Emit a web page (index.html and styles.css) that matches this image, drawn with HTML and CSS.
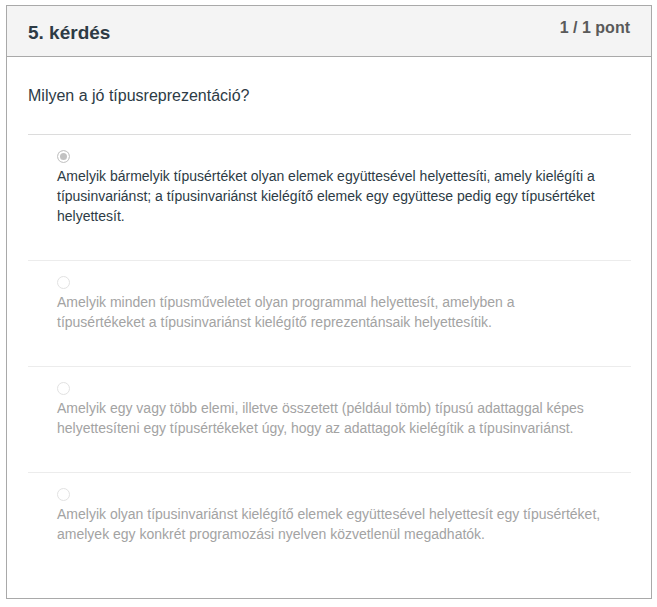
FILE: index.html
```html
<!DOCTYPE html>
<html lang="hu">
<head>
<meta charset="utf-8">
<title>5. kérdés</title>
<link rel="stylesheet" href="styles.css">
</head>
<body>
<div class="question">
  <div class="header">
    <h2 class="title">5. kérdés</h2>
    <span class="points">1 / 1 pont</span>
  </div>
  <div class="content">
    <div class="prompt">Milyen a jó típusreprezentáció?</div>
    <div class="answers">
      <div class="answer selected">
        <span class="radio checked"></span>
        <div class="answer-text">Amelyik bármelyik típusértéket olyan elemek együttesével helyettesíti, amely kielégíti a típusinvariánst; a típusinvariánst kielégítő elemek egy együttese pedig egy típusértéket helyettesít.</div>
      </div>
      <div class="answer">
        <span class="radio"></span>
        <div class="answer-text">Amelyik minden típusműveletet olyan programmal helyettesít, amelyben a típusértékeket a típusinvariánst kielégítő reprezentánsaik helyettesítik.</div>
      </div>
      <div class="answer">
        <span class="radio"></span>
        <div class="answer-text">Amelyik egy vagy több elemi, illetve összetett (például tömb) típusú adattaggal képes helyettesíteni egy típusértékeket úgy, hogy az adattagok kielégítik a típusinvariánst.</div>
      </div>
      <div class="answer">
        <span class="radio"></span>
        <div class="answer-text">Amelyik olyan típusinvariánst kielégítő elemek együttesével helyettesít egy típusértéket, amelyek egy konkrét programozási nyelven közvetlenül megadhatók.</div>
      </div>
    </div>
  </div>
</div>
</body>
</html>
```
FILE: styles.css
```css
* { box-sizing: border-box; }
html, body { margin: 0; padding: 0; background: #fff; }
body {
  font-family: "Liberation Sans", Arial, sans-serif;
  color: #333;
}
.question {
  margin: 5px 0 0 6px;
  width: 646px;
  border: 1px solid #a9a9a9;
}
.header {
  height: 51px;
  background: #f4f4f4;
  border-bottom: 1px solid #a9a9a9;
  display: flex;
  justify-content: space-between;
  align-items: flex-start;
  padding: 12px 21px 0 21px;
}
.title {
  margin: 4px 0 0 0;
  font-size: 19px;
  line-height: 22px;
  font-weight: bold;
  color: #2d3b45;
}
.points {
  font-size: 16px;
  line-height: 20px;
  font-weight: bold;
  color: #5a5a5a;
}
.content {
  padding: 29px 20px 20px 21px;
}
.prompt {
  font-size: 16px;
  line-height: 20px;
  color: #2d3b45;
  padding-bottom: 28px;
  border-bottom: 1px solid #dcdcdc;
}
.answer {
  padding: 15px 28px 34px 29px;
}
.answer + .answer {
  border-top: 1px solid #ececec;
}
.radio {
  display: block;
  width: 13px;
  height: 13px;
  border-radius: 50%;
  border: 1px solid #e2e2e2;
  background: #fff;
  margin-bottom: 3px;
}
.radio.checked {
  border-color: #c8c8c8;
  background: #c2c2c2;
  box-shadow: inset 0 0 0 2px #fff;
}
.answer-text {
  font-size: 14px;
  line-height: 20px;
  color: #a3a3a3;
}
.selected .answer-text {
  color: #2d3b45;
}
```
